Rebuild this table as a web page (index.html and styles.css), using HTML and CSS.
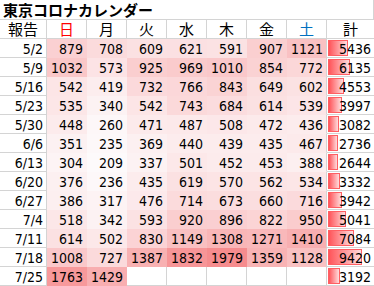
FILE: index.html
```html
<!DOCTYPE html>
<html lang="ja">
<head>
<meta charset="utf-8">
<title>東京コロナカレンダー</title>
<link rel="stylesheet" href="styles.css">
</head>
<body>
<div class="sheet">
  <div class="title">東京コロナカレンダー</div>

  <div class="c hd">報告</div><div class="c hd sun">日</div><div class="c hd">月</div><div class="c hd">火</div><div class="c hd">水</div><div class="c hd">木</div><div class="c hd">金</div><div class="c hd sat">土</div><div class="c hd last">計</div>

  <div class="c d">5/2</div><div class="c h" style="--v:879">879</div><div class="c h" style="--v:708">708</div><div class="c h" style="--v:609">609</div><div class="c h" style="--v:621">621</div><div class="c h" style="--v:591">591</div><div class="c h" style="--v:907">907</div><div class="c h s" style="--v:1121">1121</div><div class="c t" style="--t:5436"><span>5436</span></div>

  <div class="c d">5/9</div><div class="c h" style="--v:1032">1032</div><div class="c h" style="--v:573">573</div><div class="c h" style="--v:925">925</div><div class="c h" style="--v:969">969</div><div class="c h" style="--v:1010">1010</div><div class="c h" style="--v:854">854</div><div class="c h s" style="--v:772">772</div><div class="c t" style="--t:6135"><span>6135</span></div>

  <div class="c d">5/16</div><div class="c h" style="--v:542">542</div><div class="c h" style="--v:419">419</div><div class="c h" style="--v:732">732</div><div class="c h" style="--v:766">766</div><div class="c h" style="--v:843">843</div><div class="c h" style="--v:649">649</div><div class="c h s" style="--v:602">602</div><div class="c t" style="--t:4553"><span>4553</span></div>

  <div class="c d">5/23</div><div class="c h" style="--v:535">535</div><div class="c h" style="--v:340">340</div><div class="c h" style="--v:542">542</div><div class="c h" style="--v:743">743</div><div class="c h" style="--v:684">684</div><div class="c h" style="--v:614">614</div><div class="c h s" style="--v:539">539</div><div class="c t" style="--t:3997"><span>3997</span></div>

  <div class="c d">5/30</div><div class="c h" style="--v:448">448</div><div class="c h" style="--v:260">260</div><div class="c h" style="--v:471">471</div><div class="c h" style="--v:487">487</div><div class="c h" style="--v:508">508</div><div class="c h" style="--v:472">472</div><div class="c h s" style="--v:436">436</div><div class="c t" style="--t:3082"><span>3082</span></div>

  <div class="c d">6/6</div><div class="c h" style="--v:351">351</div><div class="c h" style="--v:235">235</div><div class="c h" style="--v:369">369</div><div class="c h" style="--v:440">440</div><div class="c h" style="--v:439">439</div><div class="c h" style="--v:435">435</div><div class="c h s" style="--v:467">467</div><div class="c t" style="--t:2736"><span>2736</span></div>

  <div class="c d">6/13</div><div class="c h" style="--v:304">304</div><div class="c h" style="--v:209">209</div><div class="c h" style="--v:337">337</div><div class="c h" style="--v:501">501</div><div class="c h" style="--v:452">452</div><div class="c h" style="--v:453">453</div><div class="c h s" style="--v:388">388</div><div class="c t" style="--t:2644"><span>2644</span></div>

  <div class="c d">6/20</div><div class="c h" style="--v:376">376</div><div class="c h" style="--v:236">236</div><div class="c h" style="--v:435">435</div><div class="c h" style="--v:619">619</div><div class="c h" style="--v:570">570</div><div class="c h" style="--v:562">562</div><div class="c h s" style="--v:534">534</div><div class="c t" style="--t:3332"><span>3332</span></div>

  <div class="c d">6/27</div><div class="c h" style="--v:386">386</div><div class="c h" style="--v:317">317</div><div class="c h" style="--v:476">476</div><div class="c h" style="--v:714">714</div><div class="c h" style="--v:673">673</div><div class="c h" style="--v:660">660</div><div class="c h s" style="--v:716">716</div><div class="c t" style="--t:3942"><span>3942</span></div>

  <div class="c d">7/4</div><div class="c h" style="--v:518">518</div><div class="c h" style="--v:342">342</div><div class="c h" style="--v:593">593</div><div class="c h" style="--v:920">920</div><div class="c h" style="--v:896">896</div><div class="c h" style="--v:822">822</div><div class="c h s" style="--v:950">950</div><div class="c t" style="--t:5041"><span>5041</span></div>

  <div class="c d">7/11</div><div class="c h" style="--v:614">614</div><div class="c h" style="--v:502">502</div><div class="c h" style="--v:830">830</div><div class="c h" style="--v:1149">1149</div><div class="c h" style="--v:1308">1308</div><div class="c h" style="--v:1271">1271</div><div class="c h s" style="--v:1410">1410</div><div class="c t" style="--t:7084"><span>7084</span></div>

  <div class="c d">7/18</div><div class="c h" style="--v:1008">1008</div><div class="c h" style="--v:727">727</div><div class="c h" style="--v:1387">1387</div><div class="c h" style="--v:1832">1832</div><div class="c h" style="--v:1979">1979</div><div class="c h" style="--v:1359">1359</div><div class="c h s" style="--v:1128">1128</div><div class="c t" style="--t:9420"><span>9420</span></div>

  <div class="c d">7/25</div><div class="c h" style="--v:1763">1763</div><div class="c h" style="--v:1429">1429</div><div class="c e"></div><div class="c e"></div><div class="c e"></div><div class="c e"></div><div class="c e"></div><div class="c t" style="--t:3192"><span>3192</span></div>
</div>
</body>
</html>
```

FILE: styles.css
```css
html, body {
  margin: 0;
  padding: 0;
  background: #fff;
}

.sheet {
  display: grid;
  grid-template-columns: 47px repeat(7, 40px) 47px;
  grid-template-rows: 20px repeat(14, 19px);
  width: 374px;
  color: #000;
  font-family: "DejaVu Sans Condensed", "DejaVu Sans", "Noto Sans CJK JP", sans-serif;
  font-size: 14px;
}

.title {
  grid-column: 1 / -1;
  box-sizing: border-box;
  border-bottom: 1px solid #d4d4d4;
  border-right: 1px solid #d4d4d4;
  padding-left: 3px;
  font-family: "Noto Sans CJK JP", sans-serif;
  font-weight: bold;
  font-size: 15px;
  line-height: 19px;
}

.c {
  box-sizing: border-box;
  border-right: 1px solid #d4d4d4;
  border-bottom: 1px solid #d4d4d4;
  line-height: 18px;
  padding: 1px 3px 0 0;
  text-align: right;
  white-space: nowrap;
  position: relative;
}

.hd {
  text-align: center;
  padding: 0;
  font-family: "Noto Sans CJK JP", sans-serif;
  font-size: 15px;
  line-height: 18px;
}

.hd.sun { color: #ff0000; }
.hd.sat { color: #0070c0; }
.hd.last { border-right: none; }

.h {
  background: rgb(
    calc(253 - 7 * (var(--v) - 209) / 1770),
    calc(250 - 110 * (var(--v) - 209) / 1770),
    calc(251 - 109 * (var(--v) - 209) / 1770)
  );
  border-color: transparent;
}

.h.s { border-right-color: #d4d4d4; }

.t {
  border-right: none;
}

.t::before {
  content: "";
  position: absolute;
  left: 1px;
  top: 1px;
  bottom: 1px;
  width: calc(var(--t) * 34px / 9420);
  box-sizing: border-box;
  border: 1px solid #ff5f63;
  background: linear-gradient(to right, #ff555a, #ffdcdd);
}

.t span {
  position: relative;
}
```
